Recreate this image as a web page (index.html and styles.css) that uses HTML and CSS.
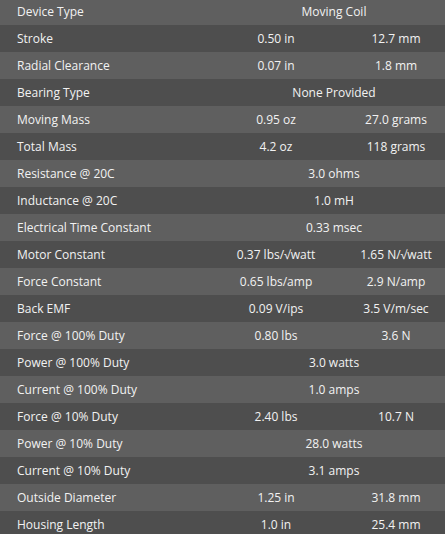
FILE: index.html
```html
<!DOCTYPE html>
<html>
<head>
<meta charset="utf-8">
<link rel="stylesheet" href="styles.css">
</head>
<body>
<table class="specs">
<colgroup><col class="c-label"><col class="c-v1"><col class="c-v2"></colgroup>
<tbody>
<tr><td class="label">Device Type</td><td class="val wide" colspan="2">Moving Coil</td></tr>
<tr><td class="label">Stroke</td><td class="val">0.50 in</td><td class="val v2">12.7 mm</td></tr>
<tr><td class="label">Radial Clearance</td><td class="val">0.07 in</td><td class="val v2">1.8 mm</td></tr>
<tr><td class="label">Bearing Type</td><td class="val wide" colspan="2">None Provided</td></tr>
<tr><td class="label">Moving Mass</td><td class="val">0.95 oz</td><td class="val v2">27.0 grams</td></tr>
<tr><td class="label">Total Mass</td><td class="val">4.2 oz</td><td class="val v2">118 grams</td></tr>
<tr><td class="label">Resistance @ 20C</td><td class="val wide" colspan="2">3.0 ohms</td></tr>
<tr><td class="label">Inductance @ 20C</td><td class="val wide" colspan="2">1.0 mH</td></tr>
<tr><td class="label">Electrical Time Constant</td><td class="val wide" colspan="2">0.33 msec</td></tr>
<tr><td class="label">Motor Constant</td><td class="val">0.37 lbs/√watt</td><td class="val v2">1.65 N/√watt</td></tr>
<tr><td class="label">Force Constant</td><td class="val">0.65 lbs/amp</td><td class="val v2">2.9 N/amp</td></tr>
<tr><td class="label">Back EMF</td><td class="val">0.09 V/ips</td><td class="val v2">3.5 V/m/sec</td></tr>
<tr><td class="label">Force @ 100% Duty</td><td class="val">0.80 lbs</td><td class="val v2">3.6 N</td></tr>
<tr><td class="label">Power @ 100% Duty</td><td class="val wide" colspan="2">3.0 watts</td></tr>
<tr><td class="label">Current @ 100% Duty</td><td class="val wide" colspan="2">1.0 amps</td></tr>
<tr><td class="label">Force @ 10% Duty</td><td class="val">2.40 lbs</td><td class="val v2">10.7 N</td></tr>
<tr><td class="label">Power @ 10% Duty</td><td class="val wide" colspan="2">28.0 watts</td></tr>
<tr><td class="label">Current @ 10% Duty</td><td class="val wide" colspan="2">3.1 amps</td></tr>
<tr><td class="label">Outside Diameter</td><td class="val">1.25 in</td><td class="val v2">31.8 mm</td></tr>
<tr><td class="label">Housing Length</td><td class="val">1.0 in</td><td class="val v2">25.4 mm</td></tr>
</tbody>
</table>
</body>
</html>
```
FILE: styles.css
```css
html, body {
  margin: 0;
  padding: 0;
  background: #4e4e4e;
  overflow: hidden;
}
.specs {
  width: 445px;
  margin-top: -2px;
  border-collapse: collapse;
  table-layout: fixed;
  font-family: "Open Sans", "Liberation Sans", sans-serif;
  font-size: 12px;
  color: #f2f2f2;
}
.c-label { width: 214px; }
.c-v1 { width: 124px; }
.c-v2 { width: 107px; }
.specs tr { height: 27px; }
.specs tr:nth-child(odd) { background: #5f5f5f; }
.specs tr:nth-child(even) { background: #4e4e4e; }
.specs td {
  padding: 0;
  height: 27px;
  vertical-align: middle;
  white-space: nowrap;
}
.label {
  padding-left: 17px !important;
  text-align: left;
}
.val { text-align: center; }
.v2, .wide { padding-left: 9px !important; }
```
